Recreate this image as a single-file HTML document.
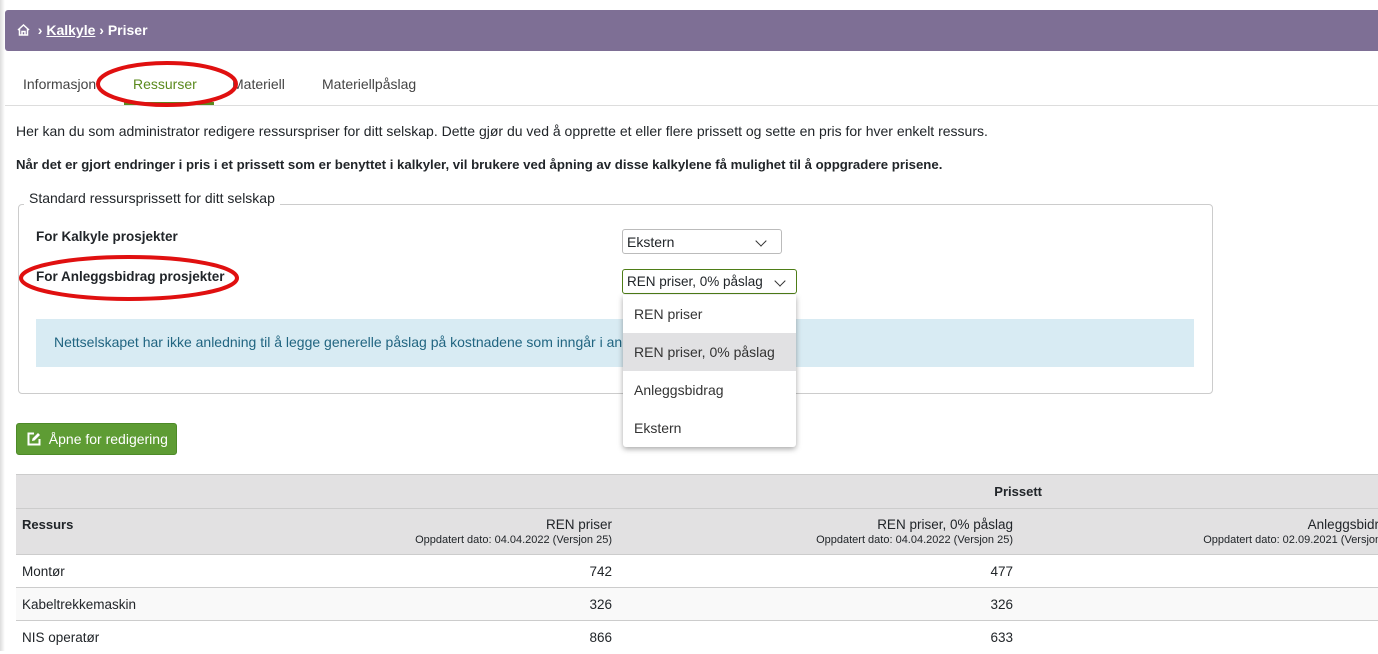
<!DOCTYPE html>
<html><head><meta charset="utf-8"><style>
*{box-sizing:border-box;margin:0;padding:0}
body{width:1378px;height:651px;overflow:hidden;background:#fff;font-family:"Liberation Sans",sans-serif;color:#212529;position:relative;font-size:14px}
.a{position:absolute;white-space:nowrap}
.hdr{left:5px;top:10px;width:1380px;height:41px;background:#7e6f95;border-radius:3px;color:#fff;font-size:14px;font-weight:bold;padding:12px 0 0 12px}
.hdr u{color:#fff}
.tabs{left:5px;top:105px;width:1380px;height:1px;background:#ddd}
.tab{top:76px;font-size:14px;color:#444}
.box{left:18px;top:204px;width:1195px;height:190px;border:1px solid #ccc;border-radius:4px}
.sel{background:#fff;border:1px solid #bbb;border-radius:3px;font-size:14px;padding:4px 0 0 4px}
.chev{position:absolute;right:16px;top:7px;width:8px;height:8px;border-right:1.5px solid #333;border-bottom:1.5px solid #333;transform:rotate(45deg)}
.menu{left:623px;top:295px;width:173px;height:152px;background:#fff;box-shadow:0 2px 6px rgba(0,0,0,.35);border-radius:0 0 3px 3px}
.menu div{height:38px;padding:11px 0 0 11px;font-size:14px;color:#333}
table{position:absolute;left:16px;top:474px;width:1420px;border-collapse:collapse;font-size:13.5px}
td,th{border-top:1px solid #ccc;padding:0 10px 0 6px}
th{background:#e2e1e2}
.r{text-align:right}
</style></head><body>
<div class="a" style="left:0;top:0;width:5px;height:651px;background:linear-gradient(90deg,#ddd,#fff)"></div>
<div class="a hdr"><svg width="13" height="12" viewBox="0 0 13 12" style="vertical-align:-1px"><path d="M1 6L6.5 1L12 6M2.5 5V11H10.5V5M5 11V7.5H8V11" fill="none" stroke="#fff" stroke-width="1.5"/></svg> &nbsp;› <u>Kalkyle</u> › Priser</div>
<div class="a tab" style="left:23px">Informasjon</div>
<div class="a tab" style="left:133px;color:#5b8a1e">Ressurser</div>
<div class="a" style="left:124px;top:102px;width:90px;height:3px;background:#5b8a1e"></div>
<div class="a tab" style="left:232px">Materiell</div>
<div class="a tab" style="left:322px">Materiellpåslag</div>
<div class="a tabs"></div>
<div class="a" style="left:16px;top:123px;font-size:14px">Her kan du som administrator redigere ressurspriser for ditt selskap. Dette gjør du ved å opprette et eller flere prissett og sette en pris for hver enkelt ressurs.</div>
<div class="a" style="left:16px;top:157px;font-size:13.2px;font-weight:bold">Når det er gjort endringer i pris i et prissett som er benyttet i kalkyler, vil brukere ved åpning av disse kalkylene få mulighet til å oppgradere prisene.</div>
<div class="a box"></div>
<div class="a" style="left:24px;top:190px;background:#fff;padding:0 5px;font-size:14px">Standard ressursprissett for ditt selskap</div>
<div class="a" style="left:36px;top:229px;font-weight:bold;font-size:13.5px">For Kalkyle prosjekter</div>
<div class="a" style="left:36px;top:269px;font-weight:bold;font-size:13.5px">For Anleggsbidrag prosjekter</div>
<div class="a sel" style="left:622px;top:229px;width:160px;height:25px">Ekstern<span class="chev"></span></div>
<div class="a sel" style="left:622px;top:269px;width:175px;height:25px;border-color:#4e7d17;font-size:13.5px">REN priser, 0% påslag<span class="chev" style="right:12px"></span></div>
<div class="a" style="left:36px;top:319px;width:1158px;height:48px;background:#d8ebf3;color:#216581;padding:15px 0 0 18px">Nettselskapet har ikke anledning til å legge generelle påslag på kostnadene som inngår i anleggsbidrag.</div>
<div class="a menu"><div>REN priser</div><div style="background:#e1e1e3">REN priser, 0% påslag</div><div>Anleggsbidrag</div><div>Ekstern</div></div>
<div class="a" style="left:16px;top:423px;width:161px;height:32px;background:#5e9c34;border:1px solid #4d8a28;border-radius:3px;color:#fff;padding:7px 0 0 10px;font-size:14px"><svg width="14" height="14" viewBox="0 0 14 14" style="vertical-align:-2px"><path d="M7 1.5H1.5V12.5H12.5V7" fill="none" stroke="#fff" stroke-width="2"/><path d="M5 9L5.5 6.5L11 1L13 3L7.5 8.5Z" fill="#fff"/></svg>&nbsp; Åpne for redigering</div>
<table>
<tr style="height:34px"><th></th><th></th><th colspan="2" style="text-align:right;padding-right:394px;font-size:13px">Prissett</th></tr>
<tr style="height:46px"><th style="text-align:left;vertical-align:top;padding-top:8px;width:200px;font-size:13px">Ressurs</th>
<th class="r" style="width:406px;font-weight:normal"><div style="font-size:13.5px">REN priser</div><div style="font-size:11px;margin-top:2px">Oppdatert dato: 04.04.2022 (Versjon 25)</div></th>
<th class="r" style="width:401px;font-weight:normal"><div style="font-size:13.5px">REN priser, 0% påslag</div><div style="font-size:11px;margin-top:2px">Oppdatert dato: 04.04.2022 (Versjon 25)</div></th>
<th class="r" style="font-weight:normal;padding-right:42px"><div style="font-size:13.5px">Anleggsbidrag</div><div style="font-size:11px;margin-top:2px">Oppdatert dato: 02.09.2021 (Versjon 3)</div></th></tr>
<tr style="height:33px"><td>Montør</td><td class="r">742</td><td class="r">477</td><td></td></tr>
<tr style="height:33px;background:#f9f9f9"><td>Kabeltrekkemaskin</td><td class="r">326</td><td class="r">326</td><td></td></tr>
<tr style="height:33px"><td>NIS operatør</td><td class="r">866</td><td class="r">633</td><td></td></tr>
</table>
<svg class="a" style="left:0;top:0" width="1378" height="651">
<ellipse cx="167" cy="84" rx="69" ry="21" fill="none" stroke="#e01010" stroke-width="4"/>
<ellipse cx="129" cy="278" rx="108" ry="21" fill="none" stroke="#e01010" stroke-width="4"/>
</svg>
</body></html>
